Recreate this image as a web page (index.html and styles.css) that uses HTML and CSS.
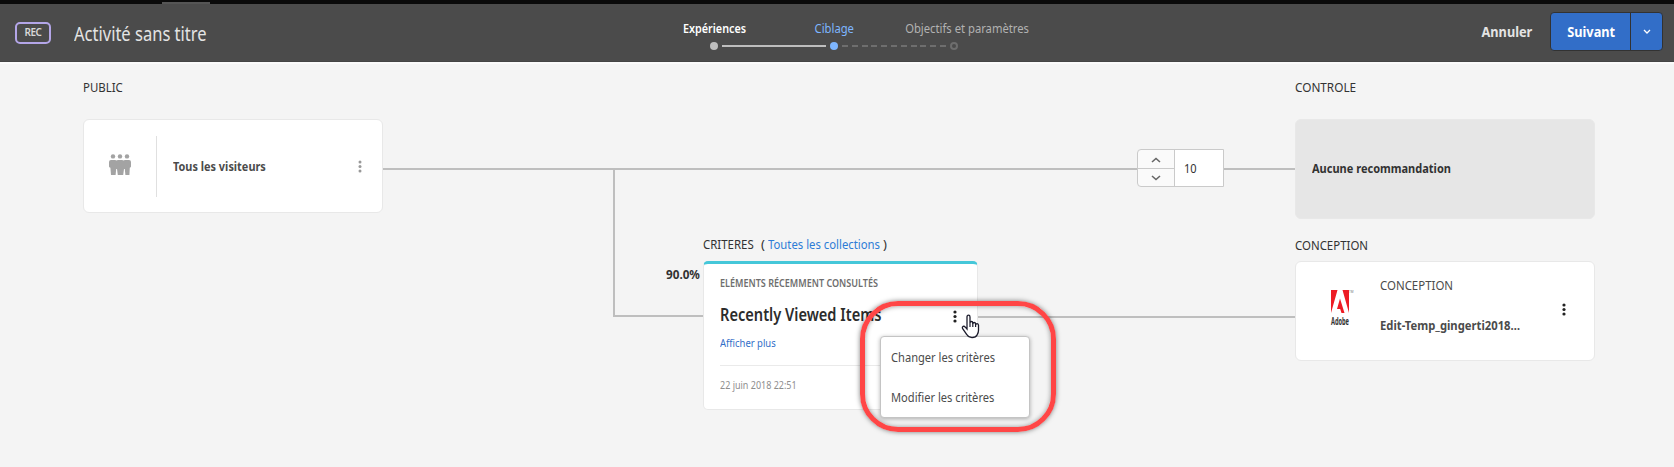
FILE: index.html
```html
<!DOCTYPE html>
<html lang="fr">
<head>
<meta charset="utf-8">
<title>Activité sans titre</title>
<link rel="stylesheet" href="styles.css">
</head>
<body>
<div class="shell-bar"><span class="shell-tab"></span></div>
<header class="header">
  <span class="badge">REC</span>
  <h1 class="title">Activité sans titre</h1>
  <ol class="steps">
    <li class="step step-done"><span class="step-label">Expériences</span><span class="step-dot"></span></li>
    <li class="step step-current"><span class="step-label">Ciblage</span><span class="step-dot"></span></li>
    <li class="step step-todo"><span class="step-label">Objectifs et paramètres</span><span class="step-dot"></span></li>
  </ol>
  <div class="actions">
    <button class="cancel"><span class="button-text">Annuler</span></button>
    <div class="split">
      <button class="next"><span class="button-text">Suivant</span></button>
      <button class="more"><svg width="8" height="6" viewBox="0 0 8 6"><path d="M1 1l3 3 3-3" fill="none" stroke="#fff" stroke-width="1.3"/></svg></button>
    </div>
  </div>
</header>
<main class="canvas">
  <svg class="links" width="1674" height="405" viewBox="0 62 1674 405">
    <path d="M383 169H1137M1224 169H1295M614 169V316H703M977 317H1295" fill="none" stroke="#bebebe" stroke-width="2"/>
  </svg>

  <section class="node node-public">
    <h2 class="label"><span class="label-text">PUBLIC</span></h2>
    <div class="card audience">
      <div class="audience-icon">
        <svg width="22" height="22" viewBox="0 0 22 22" fill="#a3a3a3">
          <circle cx="4" cy="2.400" r="2.200"/><circle cx="11" cy="2.400" r="2.200"/><circle cx="18" cy="2.400" r="2.200"/>
          <path d="M2 6h4q1 0 1.500.6Q8 6 9 6h4q1 0 1.500.6Q15 6 16 6h4q2 0 2 2v4.500q0 1-1.200 1.300l-.4 7.200h-4l-.6-6h-.8l-.8 6H8.800l-.8-6h-.8l-.6 6h-4.600l-.6-7.200Q0 13.500 0 12.500V8q0-2 2-2z"/>
        </svg>
      </div>
      <strong class="audience-name">Tous les visiteurs</strong>
      <svg class="dots dots-muted" width="4" height="13" viewBox="0 0 4 13"><circle cx="2" cy="2" r="1.500"/><circle cx="2" cy="6.500" r="1.500"/><circle cx="2" cy="11" r="1.500"/></svg>
    </div>
  </section>

  <div class="node spinner">
    <div class="spinner-buttons">
      <button class="spin"><svg width="10" height="6" viewBox="0 0 10 6"><path d="M1 5l4-3.500L9 5" fill="none" stroke="#666" stroke-width="1.600"/></svg></button>
      <button class="spin"><svg width="10" height="6" viewBox="0 0 10 6"><path d="M1 1l4 3.500L9 1" fill="none" stroke="#666" stroke-width="1.600"/></svg></button>
    </div>
    <div class="spinner-field"><span class="spinner-value">10</span></div>
  </div>

  <section class="node node-control">
    <h2 class="label"><span class="label-text label-wide">CONTROLE</span></h2>
    <div class="card control"><strong class="control-name">Aucune recommandation</strong></div>
  </section>

  <strong class="node share">90.0%</strong>

  <section class="node node-criteria">
    <h2 class="label criteria-label"><span class="label-text crit-word">CRITERES</span><span class="paren">(</span><a class="link">Toutes les collections</a><span class="paren">)</span></h2>
    <div class="card criteria">
      <div class="kind">ELÉMENTS RÉCEMMENT CONSULTÉS</div>
      <div class="criteria-head">
        <h3 class="criteria-name">Recently Viewed Items</h3>
        <svg class="dots" width="4" height="13" viewBox="0 0 4 13"><circle cx="2" cy="2" r="1.600"/><circle cx="2" cy="6.500" r="1.600"/><circle cx="2" cy="11" r="1.600"/></svg>
      </div>
      <div class="criteria-more"><a class="show-more">Afficher plus</a></div>
      <div class="date">22 juin 2018 22:51</div>
    </div>
  </section>

  <section class="node node-design">
    <h2 class="label"><span class="label-text">CONCEPTION</span></h2>
    <div class="card design">
      <svg class="logo" width="26" height="38" viewBox="0 0 26 38">
        <path d="M1 1h6.500L1 24zM12.500 1H19v23zM10 9.500l4.500 14.500h-3l-1.300-4H7z" fill="#ed1c24"/>
        <text class="logo-tm" x="19" y="4">TM</text>
        <text class="logo-text" x="1" y="36" textLength="18" lengthAdjust="spacingAndGlyphs">Adobe</text>
      </svg>
      <div class="design-text">
        <span class="design-kind">CONCEPTION</span>
        <strong class="design-name">Edit-Temp_gingerti2018…</strong>
      </div>
      <svg class="dots" width="4" height="13" viewBox="0 0 4 13"><circle cx="2" cy="2" r="1.600"/><circle cx="2" cy="6.500" r="1.600"/><circle cx="2" cy="11" r="1.600"/></svg>
    </div>
  </section>

  <ul class="menu">
    <li class="menu-item">Changer les critères</li>
    <li class="menu-item">Modifier les critères</li>
  </ul>
  <div class="highlight"></div>
  <svg class="cursor" width="20" height="25" viewBox="0 0 20 25">
    <path d="M6 15V3q0-1.800 1.500-1.800T9 3v6q0-1.500 1.400-1.500T11.800 9v.8q.1-1.300 1.400-1.300t1.400 1.500v.8q.2-1.100 1.400-1.100t1.500 1.500v5q0 2.500-1.300 4.500-1.300 2.800-5.200 2.800-3.500 0-5.200-3L1.500 14.500q-.6-1.500.6-2.100 1.200-.5 2.200.8z" fill="#fff" stroke="#1c1c2c" stroke-width="1.300"/>
    <path d="M9 9v4M11.800 9v4M14.600 10v3" stroke="#1c1c2c" stroke-width="1.200"/>
  </svg>
</main>
</body>
</html>
```
FILE: styles.css
```css
* { box-sizing: border-box; }
body { margin: 0; width: 1674px; height: 467px; overflow: hidden; background: #f4f4f4; color: #323232; font: 13px/20px "Noto Sans", sans-serif; white-space: nowrap; }
h1, h2, h3, ol, ul { margin: 0; padding: 0; font-size: 13px; font-weight: 400; list-style: none; }
button { padding: 0; margin: 0; border: 0; background: none; font: inherit; color: inherit; }
svg { display: block; flex: none; }

.shell-bar { height: 4px; padding: 2px 0 0 162px; background: #0a0a0a; }
.shell-tab { display: block; width: 48px; height: 2px; background: #555; }
.header { position: relative; display: flex; align-items: flex-start; height: 58px; padding: 0 11px 0 15px; background: #4b4b4b; border-bottom: 1px solid #444; color: #e4e4e4; }
.badge { width: 36px; height: 22px; margin-top: 18px; border: 2px solid #b4a6e8; border-radius: 5px; font-size: 10px; line-height: 17px; letter-spacing: -.5px; font-weight: 600; text-align: center; color: #d8d8d8; }
.title { margin: 15px 0 0 23px; font-size: 19px; line-height: 30px; transform: scaleX(.87); transform-origin: left; }
.steps { position: absolute; left: 654px; top: 14px; display: grid; grid-template-columns: repeat(3, 120px); }
.step { position: relative; display: flex; flex-direction: column; align-items: center; height: 36px; color: #b2b2b2; }
.step-label { transform: translateX(.5px) scaleX(.865); }
.step-done { color: #fff; font-weight: 600; }
.step-done .step-label { transform: translateX(.5px) scaleX(.83); }
.step-current { color: #7eb6ff; }
.step-todo .step-label { transform: translateX(13.500px) scaleX(.865); }
.step-dot { width: 8px; height: 8px; margin-top: 4px; border-radius: 50%; background: #bebebe; }
.step-current .step-dot { background: #7eb6ff; }
.step-todo .step-dot { background: none; border: 2px solid #6e6e6e; }
.step-done::after, .step-current::after { content: ""; position: absolute; left: 68px; top: 27px; width: 104px; height: 2px; background: #bebebe; }
.step-current::after { background: repeating-linear-gradient(90deg, #6e6e6e 0 6px, transparent 6px 9.8px); }
.actions { display: flex; margin-left: auto; font-size: 15px; font-weight: 700; }
.button-text { display: inline-block; transform: scaleX(.85); }
.cancel { height: 39px; margin: 8px 13px 0 0; line-height: 39px; }
.split { display: flex; height: 39px; margin-top: 8px; border: 1px solid #323232; border-radius: 4px; overflow: hidden; background: #326ec8; color: #fff; }
.next { width: 79px; padding: 0 0 1px 1px; }
.more { display: grid; place-items: center; width: 32px; padding-top: 1px; border-left: 1px solid #323232; }

.canvas { position: relative; height: 405px; border-top: 2px solid #fafafa; }
.links { position: absolute; left: 0; top: -2px; }
.node { position: absolute; }
.label { height: 20px; }
.label-text { display: inline-block; transform: scaleX(.88); transform-origin: left; }
.label-wide { transform: scaleX(.905); }
.card { display: flex; align-items: center; background: #fff; border: 1px solid #e8e8e8; border-radius: 6px; }
.dots { fill: #222; }
.dots-muted { fill: #999; }

.node-public { left: 83px; top: 13px; width: 300px; }
.audience { height: 94px; margin-top: 22px; }
.audience-icon { display: flex; align-items: center; width: 73px; height: 61px; padding: 0 0 3px 25px; border-right: 1px solid #e0e0e0; }
.audience-name { margin-left: 16px; color: #4b4b4b; transform: scaleX(.84); transform-origin: left; }
.audience .dots { margin-left: auto; margin-right: 20px; }

.spinner { left: 1137px; top: 85px; display: flex; width: 87px; height: 38px; border: 1px solid #cacaca; border-radius: 4px 0 0 4px; background: #fafafa; }
.spinner-buttons { display: grid; grid-template-rows: 19px 17px; width: 37px; border-right: 1px solid #cacaca; }
.spin { display: grid; place-items: center; }
.spin + .spin { border-top: 1px solid #cacaca; margin-top: -1px; }
.spinner-field { flex: 1; padding-left: 9px; line-height: 37px; background: #fff; }
.spinner-value { display: inline-block; transform: scaleX(.85); transform-origin: left; }

.node-control { left: 1295px; top: 13px; width: 300px; }
.control { height: 100px; margin-top: 22px; padding: 0 0 2px 16px; background: #e6e6e6; }
.control-name { transform: scaleX(.847); transform-origin: left; }

.share { left: 666px; top: 200px; transform: scaleX(.9); transform-origin: left; }
.node-criteria { left: 703px; top: 170px; width: 275px; }
.criteria-label { display: flex; }
.crit-word { width: 58px; }
.paren { width: 7px; }
.link { width: 115px; color: #2e7cd6; transform: scaleX(.87); transform-origin: left; }
.criteria { display: block; height: 149px; margin-top: 7px; padding: 10px 16px 0 16px; border-top: 3px solid #45c7d9; border-radius: 5px; }
.kind { height: 18px; font-size: 10px; line-height: 18px; font-weight: 600; color: #6e6e6e; transform: scaleX(.905); transform-origin: left; }
.criteria-head { display: flex; align-items: center; justify-content: space-between; height: 30px; margin-top: 8px; padding-right: 4px; }
.criteria-head .dots { margin-top: 2px; }
.criteria-name { font-size: 17px; line-height: 30px; font-weight: 600; color: #2c2c2c; transform: scaleX(.86); transform-origin: left; }
.criteria-more { height: 32px; margin-top: 4px; border-bottom: 1px solid #eaeaea; }
.show-more { display: block; font-size: 11px; line-height: 18px; color: #326ec8; transform: scaleX(.86); transform-origin: left; }
.date { margin-top: 9px; font-size: 10.500px; color: #8e8e8e; transform: scaleX(.857); transform-origin: left; }

.node-design { left: 1295px; top: 171px; width: 300px; }
.design { align-items: flex-start; height: 100px; margin-top: 6px; }
.logo { margin: 27px 0 0 34px; overflow: visible; }
.logo-text { font: 700 10px "Noto Sans", sans-serif; fill: #333; }
.logo-tm { font: 3px "Noto Sans", sans-serif; fill: #777; }
.design-text { display: grid; row-gap: 20px; margin: 13px 0 0 24px; color: #4b4b4b; }
.design-kind { transform: scaleX(.88); transform-origin: left; }
.design-name { transform: scaleX(.865); transform-origin: left; }
.design .dots { margin: 41px 28px 0 auto; }

.menu { position: absolute; left: 880px; top: 272px; display: grid; grid-template-rows: 40px 40px; width: 150px; height: 82px; border: 1px solid #c4c4c4; border-radius: 4px; background: #fff; color: #4b4b4b; line-height: 41px; padding-left: 10px; box-shadow: 0 1px 4px rgba(0,0,0,.3); }
.menu-item { transform: scaleX(.855); transform-origin: left; }
.highlight { position: absolute; left: 860px; top: 237px; width: 196px; height: 131px; border: 5px solid #ff4646; border-radius: 38px; box-shadow: 0 0 5px rgba(0,0,0,.5), inset 0 0 5px rgba(0,0,0,.4); }
.cursor { position: absolute; left: 961px; top: 250px; }
```
